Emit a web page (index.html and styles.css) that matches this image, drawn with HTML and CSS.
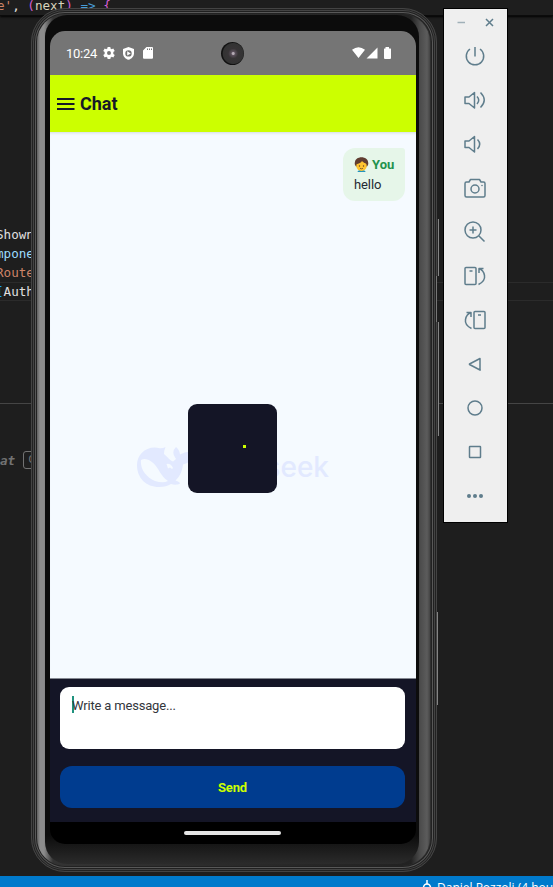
FILE: index.html
```html
<!DOCTYPE html>
<html lang="en">
<head>
<meta charset="utf-8">
<title>Chat</title>
<link rel="stylesheet" href="styles.css">
</head>
<body>
<div class="desktop">
  <div class="editor">
    <div class="sticky"><span class="str">e'</span>, <span class="paren">(</span><span class="param">next</span><span class="paren">)</span> <span class="arrow">=&gt;</span> <span class="paren">{</span></div>
    <div class="code">
      <div class="line">Shown</div>
      <div class="line prop">mpone</div>
      <div class="line str">Route</div>
      <div class="line current"><span class="bracket">[</span>Auth</div>
    </div>
    <div class="panel"><i>at</i><kbd>C</kbd></div>
    <footer class="statusline">
      <svg width="12" height="14" viewBox="0 0 12 14"><path d="M6 0v4M6 11v3" /><circle cx="6" cy="7.500" r="3.500"/></svg>
      <span>Daniel Pozzoli (4 hours</span>
    </footer>
  </div>

  <div class="phone">
    <i class="key power"></i><i class="key volume"></i><i class="key lower"></i>
    <i class="key gap"></i>
    <div class="edge"><div class="metal"><div class="bezel"><div class="screen">
      <header class="system">
        <span class="clock">10:24</span>
        <svg class="sys gear" width="12" height="12" viewBox="2 2 20 20"><path fill-rule="evenodd" d="M19.140 13.500a7.500 7.500 0 0 0 0-3l2.400-1.800-2.400-4.200-2.800 1.200a7 7 0 0 0-1.900-1.100L14.300 2H9.700l-.4 2.600a7 7 0 0 0-1.900 1.100L4.800 4.500 2.400 8.700l2.400 1.800a7.500 7.500 0 0 0 0 3l-2.400 1.800 2.400 4.200 2.600-1.200a7 7 0 0 0 1.900 1.100L9.700 22h4.600l.4-2.600a7 7 0 0 0 1.900-1.100l2.600 1.200 2.400-4.200zM12 15.300a3.300 3.300 0 1 1 0-6.600 3.300 3.300 0 0 1 0 6.600z"/></svg>
        <svg class="sys shield" width="11" height="13" viewBox="0 0 11 13"><path fill-rule="evenodd" d="M5.500 0 11 2v4.200c0 3-2.300 5.700-5.500 6.600C2.300 11.900 0 9.200 0 6.200V2zM5.500 3.200a3.200 3.200 0 1 0 0 6.400 3.200 3.200 0 0 0 0-6.400zM4.200 4.200 7.800 6.400 4.200 8.600z"/></svg>
        <svg class="sys card" width="10" height="12" viewBox="0 0 10 12"><path fill-rule="evenodd" d="M3.500 0H9q1 0 1 1v9.800q0 1-1 1H1q-1 0-1-1V3.600zM4 1.500v1.500h1V1.500zM6 1.500v1.500h1V1.500zM8 1.500v1.500h1V1.500z"/></svg>
        <span class="camera"></span>
        <svg class="sys network" width="40" height="13" viewBox="0 0 40 13"><path d="M0 2.800Q6.500-2.300 13 2.800L6.500 11zM14.500 11.500 25.500.500v11zM32 1.500h1.500V0h3.500v1.500h1.500q.5 0 .5.500v9q0 1-1 1h-5q-1 0-1-1V2q0-.5.500-.5z"/></svg>
      </header>
      <div class="appbar">
        <svg width="18" height="12" viewBox="0 0 18 12"><path d="M0 1h17.500M0 6h17.500M0 11h17.500"/></svg>
        <h1>Chat</h1>
      </div>
      <main class="chat">
        <div class="bubble">
          <div class="author"><svg width="15" height="15" viewBox="0 0 15 15"><path class="shirt" d="M3.500 15c0-1.500 2-2 4-2s4 .5 4 2z"/><path class="hair" d="M1 8C-.2 3 3.500.3 7.500.3S15.200 3 14 8l-1 1.500H2z"/><ellipse class="face" cx="7.500" cy="8.900" rx="5.200" ry="5"/><path class="hair" d="M2 7.200Q6.500 6.500 8 4q1.500 2 5 3V4L9 1.500 4 2z"/><circle class="hair" cx="5.500" cy="9" r=".7"/><circle class="hair" cx="9.500" cy="9" r=".7"/><path class="smile" d="M6 11.300q1.500 1 3 0"/></svg><b>You</b></div>
          <div class="text">hello</div>
        </div>
        <div class="brand">
          <svg width="58" height="42" viewBox="0 0 58 42"><path fill-rule="evenodd" d="M28.500 1Q26 2.500 23 2.300C10-1 0 8 0 19c0 13 9 22 22 22 5 0 9-1 12-3 3 1 7 1 9-.5q0-1.500-4.500-3c4-4 6.500-8 7.500-16q9-2 11-11-5-4-14 1-.5-5-4-7.500-4 4-2 8.500l2 3.500-3 2.500c-3-1-5-4-9-7.500q0-3.500 1.500-7zM4 14c5-3 12 1 17 9q5 9 10 12-5 2.500-13 0C9 31 3 23 4 14zM29.500 18q4-1 6.500 4l-1 1-2-1.500-2 1z"/></svg>
          <span>deepseek</span>
        </div>
        <div class="loader"><i></i></div>
      </main>
      <div class="composer">
        <div class="field"><i class="caret"></i>Write a message...</div>
        <div class="send">Send</div>
      </div>
      <div class="navbar"><i></i></div>
    </div></div></div></div>
  </div>

  <aside class="tools">
    <div class="window"><svg width="9" height="9" viewBox="0 0 9 9"><path class="faint" d="M.5 4.500h7.500"/></svg><svg width="9" height="9" viewBox="0 0 9 9"><path d="m1 1 7 7M8 1 1 8"/></svg></div>
    <svg viewBox="0 0 24 24"><path d="M12 3v9.500M7 5a8.700 8.700 0 1 0 10 0"/></svg>
    <svg viewBox="0 0 24 24"><path d="M2 9v6.500h4L11.500 20V4.500L6 9zM14 8.500q3.500 3.700 0 7.500M17.500 4.500q7.500 7.700 0 15"/></svg>
    <svg viewBox="0 0 24 24"><path d="M2 9v6.500h4L11.500 20V4.500L6 9zM14.500 7.500q4.500 4.700 0 9.500"/></svg>
    <svg viewBox="0 0 24 24"><path d="M3.500 6H6l1.500-2.500h9L18 6h2.500Q22 6 22 7.500v12q0 1.500-1.500 1.500h-17Q2 21 2 19.500v-12Q2 6 3.500 6z"/><circle cx="12" cy="13" r="4"/><circle class="dot" cx="19" cy="9.500" r=".8"/></svg>
    <svg viewBox="0 0 24 24"><circle cx="10" cy="10" r="8"/><path d="m16 16 5.500 5.500M6.500 10h7M10 6.500v7"/></svg>
    <svg viewBox="0 0 24 24"><path d="M3 3.500h9q1 0 1 1v15q0 1-1 1H3q-1 0-1-1v-15q0-1 1-1zM6.500 7h3M15.500 20.500q7-3.500 6-9T16 4.500M20.500 4.500H16V9"/></svg>
    <svg viewBox="0 0 24 24"><path d="M12 3.500h9q1 0 1 1v15q0 1-1 1h-9q-1 0-1-1v-15q0-1 1-1zM15 7h3M8.500 20.500q-7-3.500-6-9T8 4.500M3.500 4.500H8V9"/></svg>
    <svg viewBox="0 0 24 24"><path d="M17 6.500v11Q17.500 18 17 18L6.500 12.500V12z"/></svg>
    <svg viewBox="0 0 24 24"><circle cx="12" cy="12" r="7"/></svg>
    <svg viewBox="0 0 24 24"><rect x="6.500" y="6.500" width="11" height="11" rx=".5"/></svg>
    <svg viewBox="0 0 24 24"><g class="dot"><circle cx="6" cy="12" r="2"/><circle cx="12" cy="12" r="2"/><circle cx="18" cy="12" r="2"/></g></svg>
  </aside>
</div>
</body>
</html>
```
FILE: styles.css
```css
* { box-sizing: border-box; }
body { margin: 0; background: #1e1e1e; }
.desktop { position: relative; width: 553px; height: 887px; overflow: hidden; font-family: Roboto, sans-serif; }
svg { display: block; flex: none; }

.editor { height: 887px; display: flex; flex-direction: column; color: #e0e0e0; font: 12.6px/19px "DejaVu Sans Mono", monospace; }
.sticky { height: 16px; flex: none; line-height: 12px; border-bottom: 1px solid #0b0b0b; box-shadow: 0 1px 2px #000; text-indent: -3px; white-space: pre; }
.str { color: #ce8468; }
.paren { color: #d65fd6; }
.param { color: #d8d4bd; }
.arrow { color: #489bd6; }
.code { height: 388px; padding-top: 209px; border-bottom: 1px solid #454545; }
.line { height: 19px; text-indent: -4px; }
.prop { color: #9cdcfe; }
.current { border-top: 1px solid #2b2b2b; border-bottom: 1px solid #2b2b2b; line-height: 17px; }
.bracket { color: #179fff; }
.panel { flex: 1; padding-top: 47px; display: flex; align-items: flex-start; gap: 8px; color: #727272; }
.panel i { font-weight: 700; }
.panel kbd { width: 30px; height: 18px; border: 1px solid #727272; border-radius: 3px; padding-left: 4px; font: 11px/16px "DejaVu Sans Mono", monospace; }
.statusline { height: 11px; background: #007acc; color: #fff; padding-left: 421px; display: flex; gap: 4px; overflow: hidden; white-space: nowrap; font: 12px/24px "Open Sans", sans-serif; }
.statusline svg { margin-top: 4px; fill: none; stroke: #fff; stroke-width: 1.5; }

.phone { position: absolute; left: 31px; top: 8px; width: 406px; height: 864px; }
.edge { height: 100%; border-radius: 34px; padding: 5px 6px 5px 5px; background: #303030; border: 1px solid #444; box-shadow: inset 0 0 0 1px #222, inset 0 0 0 2px #444, inset 0 0 0 3px #202020, inset 0 0 0 4px #585858, inset 0 0 0 5px #222; }
.metal { height: 852px; border-radius: 28px; padding: 1px 11px 2px 8px; background: linear-gradient(90deg, #606060, #8c8c8c 3px, #8c8c8c 7px, #333 16px, #222 374px, #4b4b4b 383px, #5c5c5c 390px, #444); }
.bezel { height: 849px; border-radius: 22px; background: linear-gradient(#0c0c0c 820px, #2b2b2b); padding: 16px 4px 0 5px; }
.screen { width: 366px; height: 813px; border-radius: 15px; overflow: hidden; background: #000; }
.key { position: absolute; right: -2px; width: 2px; background: linear-gradient(90deg, #292929 1px, #858585 1px); }
.power { top: 211px; height: 57px; }
.gap { right: 0; top: 268px; width: 1px; height: 46px; background: #777; }
.volume { top: 314px; height: 114px; }
.lower { right: -1px; top: 604px; height: 93px; width: 1px; background: #858585; }

.system { height: 44px; background: #757575; display: flex; align-items: center; color: #fff; padding: 0 25px 0 16px; font-size: 13px; }
.sys { fill: #fff; }
.clock { width: 37px; letter-spacing: -.25px; }
.shield { margin-left: 8px; }
.card { margin-left: 9px; }
.camera { width: 23px; height: 23px; margin-left: 68px; border-radius: 50%; background: radial-gradient(circle at 53% 50%, #b5abb5 0 1px, #5b505b 2px, #373436 5px, #333 10px, #111 11px); }
.network { margin-left: auto; margin-right: -1px; }
.appbar { height: 57px; background: #cf0; display: flex; align-items: center; gap: 5px; padding-left: 7px; color: #161927; }
.appbar svg { fill: none; stroke: #161927; stroke-width: 1.8; }
.appbar h1 { margin: 0; font: 700 18px/24px Roboto, sans-serif; }
.chat { position: relative; height: 546px; padding: 16px 11px; background: #f5faff; box-shadow: inset 0 3px 3px -2px #d4dce0; }
.bubble { margin-left: auto; width: 62px; height: 53px; padding: 7px 11px; background: #e6f6e9; border-radius: 12px 3px 12px 12px; color: #242932; font-size: 13px; }
.author { height: 18px; display: flex; align-items: center; gap: 3px; color: #22924c; white-space: nowrap; }
.author b { font-weight: 700; }
.text { line-height: 24px; letter-spacing: -.1px; }
.hair { fill: #603d30; }
.face { fill: #ffc52f; }
.shirt { fill: #2494bd; }
.smile { fill: none; stroke: #714b22; stroke-width: .8; }
.brand { position: absolute; left: 87px; top: 314px; width: 192px; display: flex; justify-content: space-between; align-items: center; color: #e2e9ff; font: 500 28px/40px Inter, sans-serif; }
.brand svg { fill: #e2e9ff; }
.loader { position: absolute; left: 138px; top: 272px; width: 89px; height: 89px; border-radius: 9px; background: #141526; }
.loader i { position: absolute; left: 55px; top: 41px; width: 3px; height: 3px; background: #cf0; }
.composer { height: 144px; padding: 8px 11px 0 10px; background: #141526; border-top: 1px solid #858992; }
.field { height: 62px; padding: 8px 12px; display: flex; align-items: flex-start; background: #fff; border-radius: 9px; color: #33363c; font-size: 13px; line-height: 21px; letter-spacing: -.18px; }
.caret { width: 2px; height: 17px; margin: 1px -2px 0 0; background: #20927e; }
.send { height: 42px; margin-top: 17px; background: #003c8f; border-radius: 12px; color: #cf0; font-size: 13px; font-weight: 700; line-height: 43px; text-align: center; letter-spacing: -.15px; }
.navbar { height: 22px; display: flex; align-items: center; justify-content: center; padding-right: 1px; }
.navbar i { width: 97px; height: 4px; border-radius: 2px; background: #e5e5e5; }

.tools { position: absolute; left: 443px; top: 8px; width: 65px; height: 515px; padding-right: 1px; background: #efefef; border: 1px solid #000; display: flex; flex-direction: column; align-items: center; }
.tools svg { width: 24px; height: 24px; margin-bottom: 20px; fill: none; stroke: #5f7d8c; stroke-width: 1.5; stroke-linejoin: round; }
.tools .window { width: 37px; height: 9px; margin: 9px 0 17px; display: flex; justify-content: space-between; }
.window svg { width: 9px; height: 9px; }
.window .faint { stroke: #a0b0b8; }
.tools .dot { fill: #5f7d8c; stroke: none; }
```
